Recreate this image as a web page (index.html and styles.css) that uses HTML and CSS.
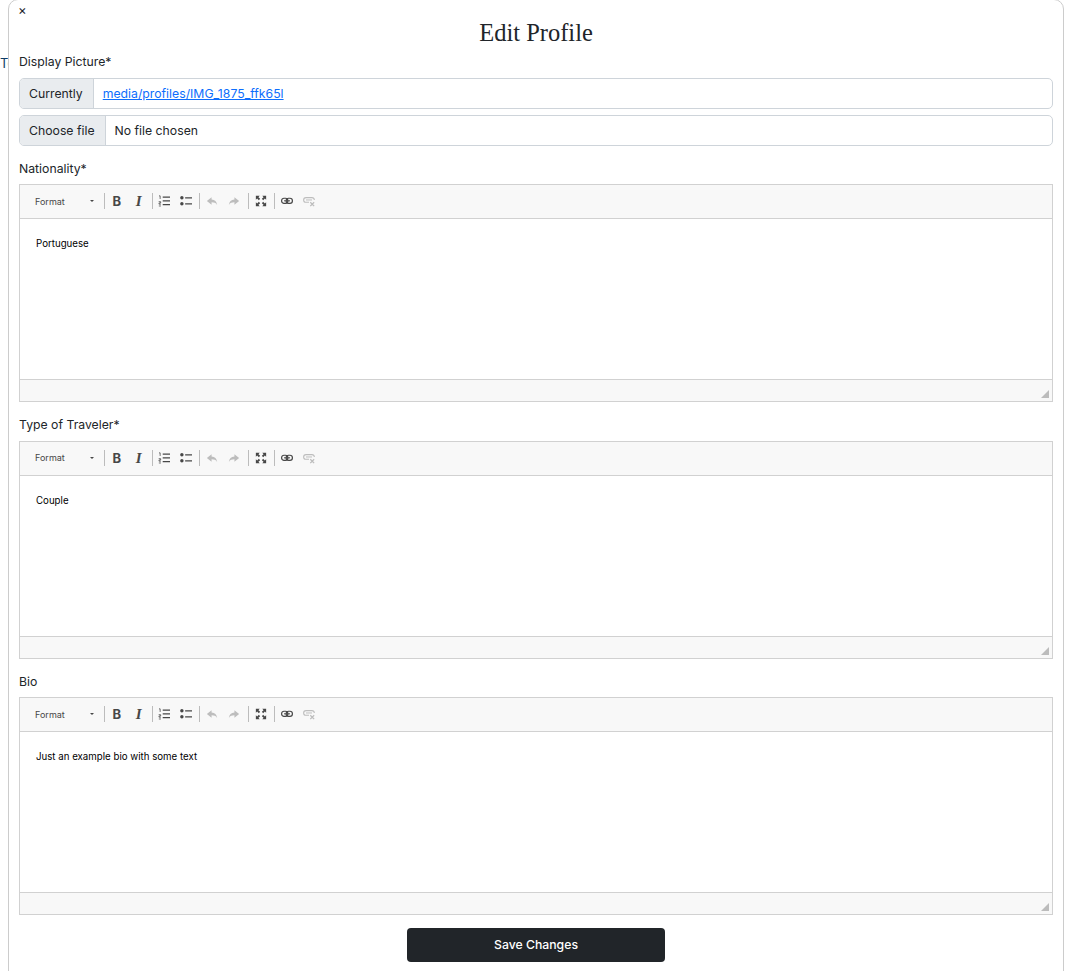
FILE: index.html
```html
<!DOCTYPE html>
<html lang="en">
<head>
  <meta charset="UTF-8">
  <meta name="viewport" content="width=device-width, initial-scale=1.0">
  <title>Edit Profile</title>
  <link rel="stylesheet" href="styles.css">
</head>
<body>

<svg class="sprite" width="0" height="0">
  <symbol id="i-ol" viewBox="0 0 14 14">
    <path d="M1.200 1h1.300v3.600M.8 7.800h2.300v1.500H1.200v1.400h2.200M1 12.800h2.400" fill="none" stroke="currentColor" stroke-width=".9"/>
    <path d="M5.500 1.800h8.500v1.500H5.500zM5.500 6.200h8.500v1.500H5.500zM5.500 10.600h8.500v1.500H5.500z" fill="currentColor"/>
  </symbol>
  <symbol id="i-ul" viewBox="0 0 14 14">
    <circle cx="2.200" cy="3.300" r="2" fill="currentColor"/>
    <circle cx="2.200" cy="10.300" r="2" fill="currentColor"/>
    <path d="M6 2.500h8V4H6zM6 9.500h8V11H6z" fill="currentColor"/>
  </symbol>
  <symbol id="i-undo" viewBox="0 0 14 14">
    <path d="M6.500 2.500 1 7l5.500 4.500V8.600c3 0 5 .8 6.500 3-.4-3.700-2.700-6-6.500-6.300z" fill="currentColor"/>
  </symbol>
  <symbol id="i-redo" viewBox="0 0 14 14">
    <path d="M7.500 2.500 13 7l-5.500 4.500V8.600c-3 0-5 .8-6.500 3 .4-3.700 2.700-6 6.500-6.300z" fill="currentColor"/>
  </symbol>
  <symbol id="i-max" viewBox="0 0 14 14">
    <path d="M1 1h4.500L4 2.500l2 2L4.500 6l-2-2L1 5.500zM13 1v4.500L11.500 4l-2 2L8 4.500l2-2L8.500 1zM1 13V8.500L2.500 10l2-2L6 9.500l-2 2L5.500 13zM13 13H8.500l1.500-1.500-2-2L9.500 8l2 2L13 8.500z" fill="currentColor"/>
  </symbol>
  <symbol id="i-link" viewBox="0 0 14 14">
    <rect x=".7" y="3.800" width="7.300" height="6" rx="2.800" fill="none" stroke="currentColor" stroke-width="1.400"/>
    <rect x="6" y="3.800" width="7.300" height="6" rx="2.800" fill="none" stroke="currentColor" stroke-width="1.400"/>
    <path d="M3.500 6.800h7" stroke="currentColor" stroke-width="1.200"/>
  </symbol>
  <symbol id="i-unlink" viewBox="0 0 14 14">
    <path d="M7 8.500H3.500a2.700 2.700 0 0 1 0-5.500h7a2.700 2.700 0 0 1 2.700 2.700" fill="none" stroke="currentColor" stroke-width="1.300"/>
    <path d="M3.500 5.800h7" stroke="currentColor" stroke-width="1.100"/>
    <path d="M8.500 8.500l4.500 4.500M13 8.500l-4.500 4.500" stroke="currentColor" stroke-width="1.500"/>
  </symbol>
</svg>

<span class="behind-text">To</span>

<div class="modal">
  <span class="close">&times;</span>
  <h1 class="title">Edit Profile</h1>

  <form>
    <label class="field-label">Display Picture*</label>
    <div class="input-group">
      <span class="addon">Currently</span>
      <a class="input-value file-link" href="#">media/profiles/IMG_1875_ffk65l</a>
    </div>
    <div class="input-group">
      <span class="addon">Choose file</span>
      <span class="input-value">No file chosen</span>
    </div>

    <label class="field-label editor-label">Nationality*</label>
    <div class="editor editor-first">
      <div class="toolbar">
        <span class="format">Format<span class="caret"></span></span>
        <span class="sep"></span>
        <span class="tool tool-b">B</span>
        <span class="tool tool-i">I</span>
        <span class="sep"></span>
        <svg class="icon"><use href="#i-ol"/></svg>
        <svg class="icon"><use href="#i-ul"/></svg>
        <span class="sep"></span>
        <svg class="icon off"><use href="#i-undo"/></svg>
        <svg class="icon off"><use href="#i-redo"/></svg>
        <span class="sep sep-wide"></span>
        <svg class="icon"><use href="#i-max"/></svg>
        <span class="sep"></span>
        <svg class="icon"><use href="#i-link"/></svg>
        <svg class="icon off"><use href="#i-unlink"/></svg>
      </div>
      <div class="editor-body">Portuguese</div>
      <div class="editor-foot"><span class="grip"></span></div>
    </div>

    <label class="field-label editor-label">Type of Traveler*</label>
    <div class="editor">
      <div class="toolbar">
        <span class="format">Format<span class="caret"></span></span>
        <span class="sep"></span>
        <span class="tool tool-b">B</span>
        <span class="tool tool-i">I</span>
        <span class="sep"></span>
        <svg class="icon"><use href="#i-ol"/></svg>
        <svg class="icon"><use href="#i-ul"/></svg>
        <span class="sep"></span>
        <svg class="icon off"><use href="#i-undo"/></svg>
        <svg class="icon off"><use href="#i-redo"/></svg>
        <span class="sep sep-wide"></span>
        <svg class="icon"><use href="#i-max"/></svg>
        <span class="sep"></span>
        <svg class="icon"><use href="#i-link"/></svg>
        <svg class="icon off"><use href="#i-unlink"/></svg>
      </div>
      <div class="editor-body">Couple</div>
      <div class="editor-foot"><span class="grip"></span></div>
    </div>

    <label class="field-label editor-label">Bio</label>
    <div class="editor">
      <div class="toolbar">
        <span class="format">Format<span class="caret"></span></span>
        <span class="sep"></span>
        <span class="tool tool-b">B</span>
        <span class="tool tool-i">I</span>
        <span class="sep"></span>
        <svg class="icon"><use href="#i-ol"/></svg>
        <svg class="icon"><use href="#i-ul"/></svg>
        <span class="sep"></span>
        <svg class="icon off"><use href="#i-undo"/></svg>
        <svg class="icon off"><use href="#i-redo"/></svg>
        <span class="sep sep-wide"></span>
        <svg class="icon"><use href="#i-max"/></svg>
        <span class="sep"></span>
        <svg class="icon"><use href="#i-link"/></svg>
        <svg class="icon off"><use href="#i-unlink"/></svg>
      </div>
      <div class="editor-body">Just an example bio with some text</div>
      <div class="editor-foot"><span class="grip"></span></div>
    </div>

    <div class="actions">
      <button type="button" class="save">Save Changes</button>
    </div>
  </form>
</div>

</body>
</html>
```

FILE: styles.css
```css
html, body {
  height: 100%;
  overflow: hidden;
}
body {
  margin: 0;
  background-color: #fff;
  color: #212529;
  font-family: Inter, "Liberation Sans", sans-serif;
  font-size: 12.25px;
}
.sprite {
  position: absolute;
}
.behind-text {
  position: absolute;
  left: 0;
  top: 55px;
  color: #0d3b66;
  font-size: 13px;
}
.modal {
  position: relative;
  box-sizing: border-box;
  width: 1056px;
  height: 990px;
  margin: -1px 0 0 8px;
  padding: 0 10px;
  background-color: #fff;
  border: 1px solid #ccc;
  border-radius: 10px;
}
.close {
  position: absolute;
  left: 9px;
  top: 3px;
  font-size: 13px;
  line-height: 14px;
}
.title {
  margin: 17px 0 0;
  height: 34px;
  font-family: "Liberation Serif", serif;
  font-size: 24.5px;
  font-weight: 400;
  line-height: 32px;
  text-align: center;
}
.field-label {
  display: block;
  height: 19px;
  margin-top: 1px;
  line-height: 19px;
}
.input-group {
  display: flex;
  box-sizing: border-box;
  height: 31px;
  margin-top: 7px;
  border: 1px solid #ced4da;
  border-radius: 5px;
  overflow: hidden;
  line-height: 29px;
}
.input-group + .input-group {
  margin-top: 6px;
}
.addon {
  padding: 0 10px 0 9px;
  background-color: #e9ecef;
  border-right: 1px solid #ced4da;
}
.input-value {
  padding: 0 10px 0 9px;
}
.file-link {
  color: #0d6efd;
}
.editor-label {
  margin-top: 13px;
}
.editor {
  box-sizing: border-box;
  height: 218px;
  margin-top: 6.5px;
  border: 1px solid #d1d1d1;
  display: flex;
  flex-direction: column;
}
.editor-first {
  margin-top: 6px;
}
.toolbar {
  display: flex;
  align-items: center;
  flex: none;
  box-sizing: border-box;
  height: 34px;
  padding: 0 0 1px 15px;
  background-color: #f8f8f8;
  border-bottom: 1px solid #d1d1d1;
  color: #474747;
}
.format {
  display: flex;
  align-items: center;
  width: 67px;
  font-size: 9px;
}
.caret {
  margin: 0 8px 0 auto;
  border-top: 2px solid #474747;
  border-left: 2px solid transparent;
  border-right: 2px solid transparent;
}
.sep {
  flex: none;
  width: 1px;
  height: 16px;
  margin: 0 1px 0 2px;
  background-color: #bcbcbc;
}
.sep-wide {
  margin-left: 3.5px;
}
.tool {
  flex: none;
  width: 21.8px;
  text-align: center;
  font-size: 13px;
  line-height: 16px;
}
.tool-b {
  font-weight: 700;
}
.tool-i {
  font-family: "Liberation Serif", serif;
  font-size: 15px;
  font-style: italic;
  font-weight: 700;
}
.icon {
  flex: none;
  width: 12px;
  height: 12px;
  margin: 0 4.9px;
}
.icon.off {
  color: #bdbdbd;
}
.editor-body {
  flex: 1;
  padding: 20px 16px 0;
  background-color: #fff;
  color: #000;
  font-size: 9.7px;
  line-height: 10px;
}
.editor-foot {
  position: relative;
  flex: none;
  height: 22px;
  box-sizing: border-box;
  background-color: #f8f8f8;
  border-top: 1px solid #d1d1d1;
}
.grip {
  position: absolute;
  right: 3px;
  bottom: 3px;
  width: 0;
  height: 0;
  border-bottom: 8px solid #bcbcbc;
  border-left: 8px solid transparent;
}
.actions {
  display: flex;
  justify-content: center;
  margin-top: 13px;
}
.save {
  width: 258px;
  height: 34px;
  padding: 0 0 2px;
  background-color: #212529;
  color: white;
  border: none;
  border-radius: 4px;
  font-family: inherit;
  font-size: 12.25px;
  font-weight: 500;
  cursor: pointer;
}
```
